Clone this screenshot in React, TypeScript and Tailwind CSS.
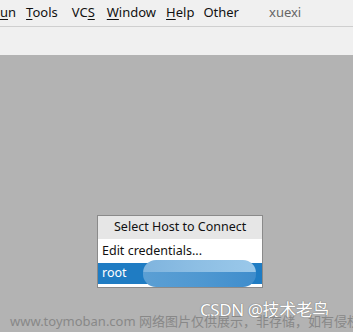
import React from "react";

const font = { fontFamily: '"Noto Sans", "Noto Sans CJK SC", sans-serif' };

const MenuItem = ({ pre, u, post, className = "" }: { pre?: string; u?: string; post?: string; className?: string }) => (
  <span className={`text-[13px] text-[#111] ${className}`}>
    {pre}
    {u && <span className="underline underline-offset-2">{u}</span>}
    {post}
  </span>
);

export default function App() {
  return (
    <div className="relative w-[353px] h-[332px] overflow-hidden bg-[#b3b3b3]" style={font}>
      {/* menu bar */}
      <div className="h-[27px] bg-[#f0f0f0] border-b border-[#cfcfcf] flex items-center">
        <MenuItem u="u" post="n" className="ml-0" />
        <MenuItem u="T" post="ools" className="ml-[10px]" />
        <MenuItem pre="VC" u="S" className="ml-[14px]" />
        <MenuItem u="W" post="indow" className="ml-[12px]" />
        <MenuItem u="H" post="elp" className="ml-[10px]" />
        <MenuItem pre="Other" className="ml-[9px]" />
        <span className="ml-[30px] text-[13px] text-[#666]">xuexi</span>
      </div>
      {/* toolbar strip */}
      <div className="h-[28px] bg-[#f0f0f0]" />

      {/* popup */}
      <div className="pt-[160px] pl-[97px]">
        <div className="relative w-[166px] border border-[#8a8a8a] bg-white">
          <div className="h-[23px] bg-[#e6e6e6] flex items-center pl-[16px] text-[12.5px] text-[#111]">
            Select Host to Connect
          </div>
          <div className="h-[24px] flex items-center pl-[4px] text-[12.5px] text-[#111]">Edit credentials...</div>
          <div className="h-[21px] bg-[#1f7cc3] flex items-center pl-[4px] text-[12.5px] text-white">root</div>
          <div className="h-[3px]" />
          {/* blurred host name */}
          <div className="absolute left-[45px] top-[44px] w-[113px] h-[27px] rounded-[13px] overflow-hidden flex flex-col">
            <div className="h-[12px] bg-gradient-to-r from-[#7fb4de] via-[#8ebfe4] to-[#9ac8ea]" />
            <div className="flex-1 bg-gradient-to-r from-[#5b9fd4] via-[#4f98d1] to-[#3f8dcc]" />
          </div>
        </div>
      </div>

      {/* watermarks */}
      <div
        className="absolute left-[200px] top-[297px] text-[17px] text-white tracking-tight whitespace-nowrap"
        style={{ textShadow: "0 0 1px #777, 0 0 1px #777" }}
      >
        CSDN @技术老鸟
      </div>
      <div className="absolute left-[10px] top-[312px] text-[13px] text-[#888] whitespace-nowrap">
        www.toymoban.com 网络图片仅供展示，非存储，如有侵权
      </div>
    </div>
  );
}
